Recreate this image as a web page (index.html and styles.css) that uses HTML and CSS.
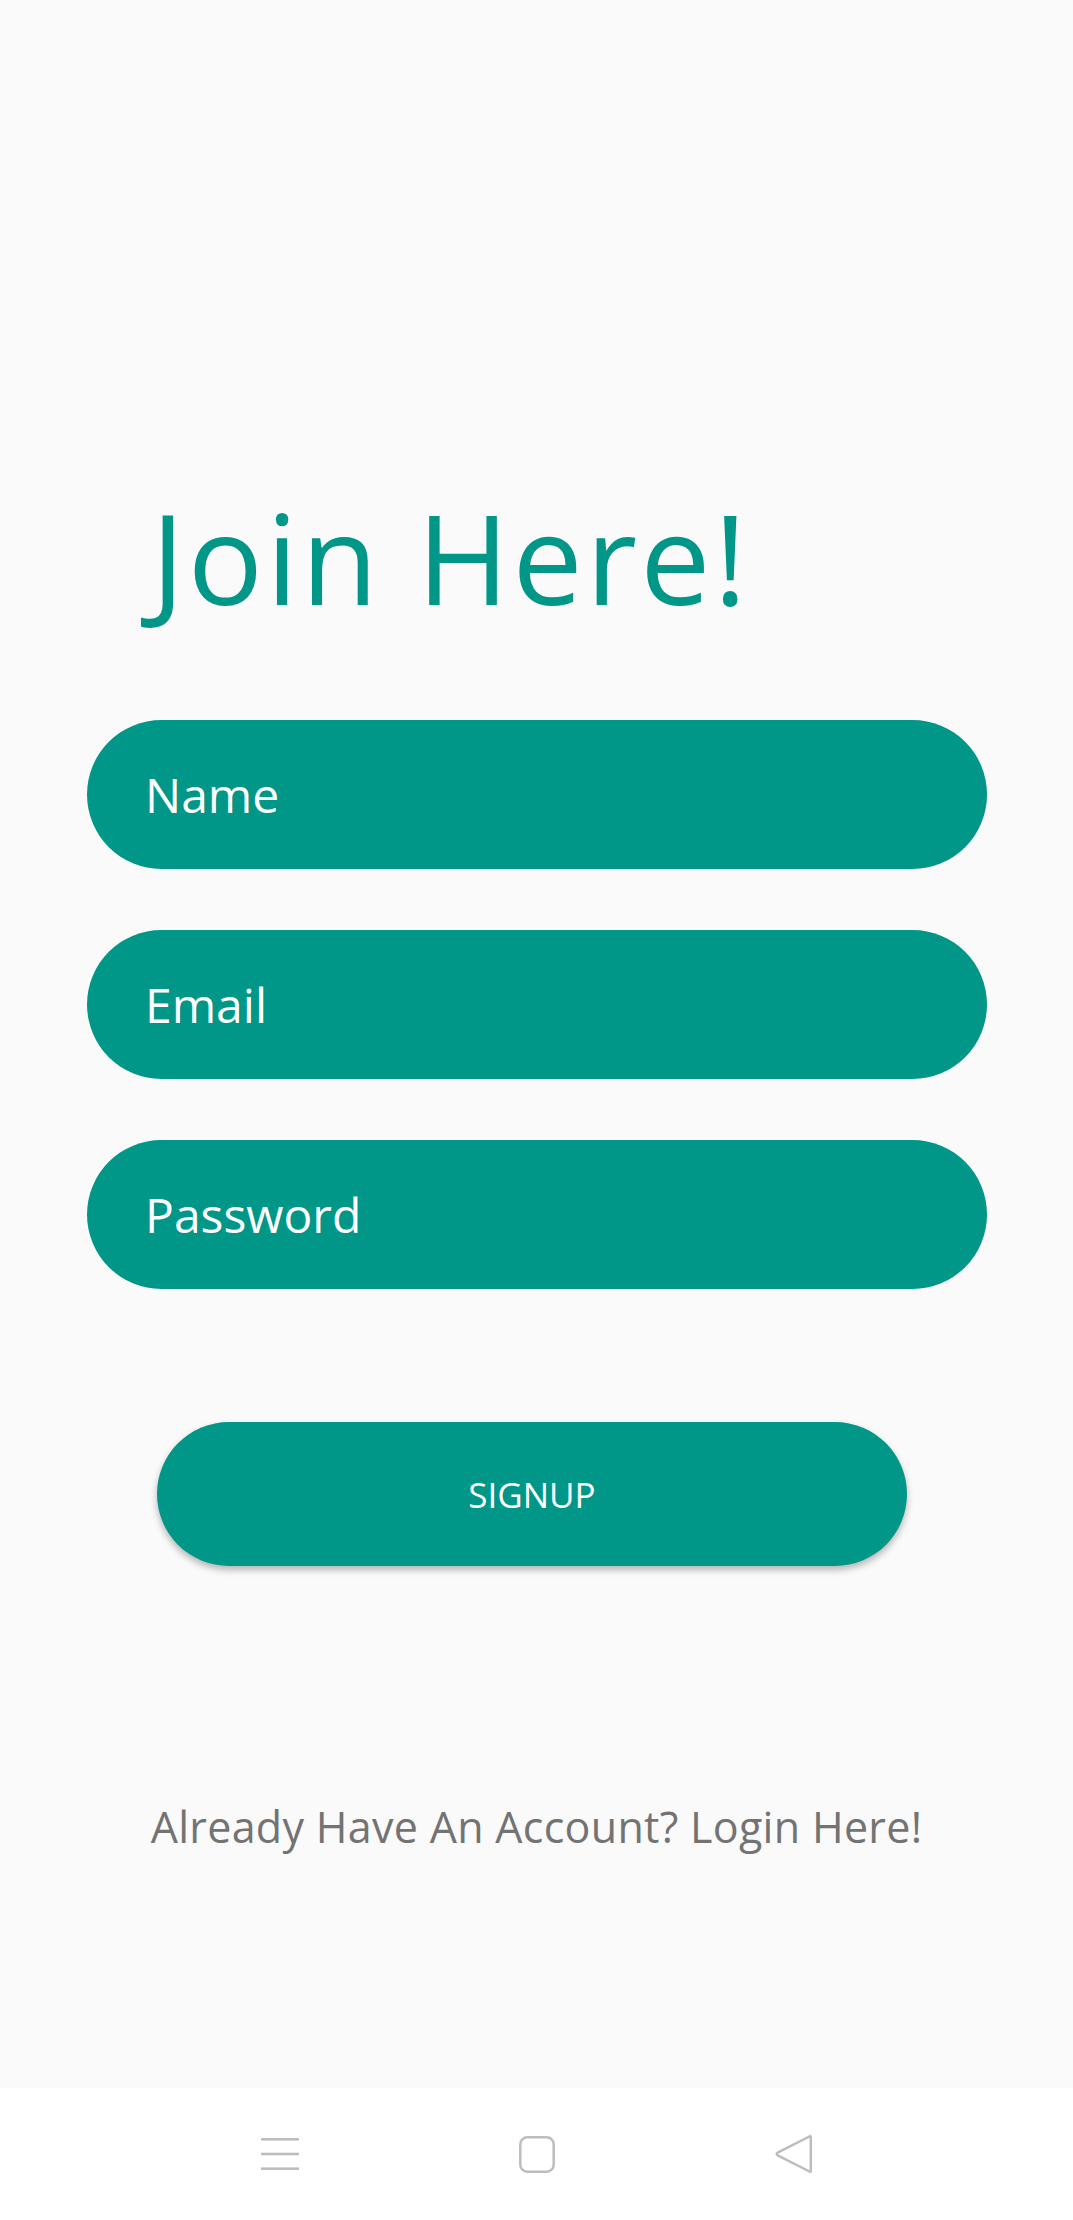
FILE: index.html
```html
<!DOCTYPE html>
<html>
<head>
<meta charset="utf-8">
<link rel="stylesheet" href="styles.css">
</head>
<body>
<main class="screen">
  <h1 class="title">Join Here!</h1>
  <form class="form">
    <div class="field">Name</div>
    <div class="field">Email</div>
    <div class="field">Password</div>
  </form>
  <div class="btn-row"><div class="btn">SIGNUP</div></div>
  <p class="login">Already Have An Account? Login Here!</p>
</main>
<nav class="navbar">
  <div class="nav-cell">
    <svg width="38" height="32" viewBox="0 0 38 32"><g fill="#bdbdbd"><rect x="0" y="0" width="38" height="2.6"/><rect x="0" y="14.7" width="38" height="2.6"/><rect x="0" y="29.4" width="38" height="2.6"/></g></svg>
  </div>
  <div class="nav-cell">
    <svg width="36" height="37" viewBox="0 0 36 37"><rect x="1.3" y="1.3" width="33.4" height="34.4" rx="7" fill="none" stroke="#bdbdbd" stroke-width="2.5"/></svg>
  </div>
  <div class="nav-cell">
    <svg width="39" height="42" viewBox="0 0 39 42"><path d="M35.5 3.5 Q36.8 2.3 36.8 4.5 L36.8 37.5 Q36.8 39.7 35.5 38.5 L3.6 22.3 Q1.8 21 3.6 19.7 Z" fill="none" stroke="#bdbdbd" stroke-width="2.5" stroke-linejoin="round"/></svg>
  </div>
</nav>
</body>
</html>
```
FILE: styles.css
```css
* { box-sizing: border-box; }
html, body { margin: 0; padding: 0; }
body {
  background: #fafafa;
  font-family: "Open Sans", "Noto Sans", sans-serif;
  width: 1073px;
}
.screen {
  height: 2088px;
  display: flex;
  flex-direction: column;
}
.title {
  margin: 494px 0 0 151px;
  font-size: 125px;
  line-height: 125px;
  height: 125px;
  font-weight: 400;
  color: #009688;
  letter-spacing: 3.3px;
}
.form {
  margin: 101px 86px 0 87px;
  display: flex;
  flex-direction: column;
  gap: 61px;
}
.field {
  height: 149px;
  border-radius: 75px;
  background: #009688;
  color: #ffffff;
  font-size: 48px;
  line-height: 1;
  display: flex;
  align-items: center;
  padding-left: 58px;
}
.btn-row {
  margin-top: 133px;
  padding-left: 157px;
}
.btn {
  width: 750px;
  height: 144px;
  border-radius: 72px;
  background: #009688;
  color: #ffffff;
  font-size: 35px;
  line-height: 1;
  display: flex;
  align-items: center;
  justify-content: center;
  box-shadow: 0 4px 7px rgba(0, 0, 0, 0.28);
}
.login {
  margin: 239px 0 0 0;
  text-align: center;
  font-size: 43px;
  line-height: 1;
  color: #737373;
  letter-spacing: 0.3px;
}
.navbar {
  height: 132px;
  background: #ffffff;
  display: flex;
  justify-content: center;
  align-items: center;
  gap: 197px;
}
.nav-cell {
  width: 60px;
  display: flex;
  justify-content: center;
  align-items: center;
}
.nav-cell svg { display: block; }
```
